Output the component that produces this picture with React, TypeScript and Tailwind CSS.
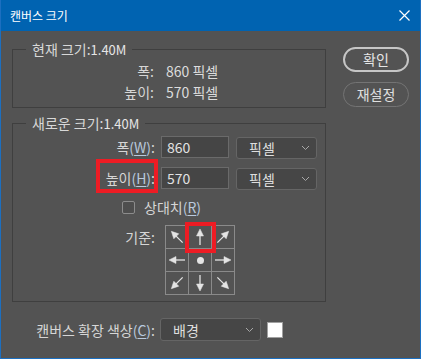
import React from 'react';

const font = { fontFamily: '"Noto Sans CJK KR", "Noto Sans", sans-serif' };

function Mnemonic({ ch }: { ch: string }) {
  return (
    <span className="text-[#b9c9dd]">
      (<span className="underline underline-offset-2">{ch}</span>)
    </span>
  );
}

function Chevron() {
  return (
    <svg width="9" height="6" viewBox="0 0 9 6" className="shrink-0">
      <path d="M1 1 L4.5 4.5 L8 1" fill="none" stroke="#a8a8a8" strokeWidth="1" />
    </svg>
  );
}

function Select({ value, className }: { value: string; className: string }) {
  return (
    <div
      className={`flex items-center justify-between rounded-[3px] border border-[#656565] bg-[#464646] pl-[12px] pr-[6px] text-[14px] text-[#dedede] ${className}`}
    >
      <span className="leading-none">{value}</span>
      <Chevron />
    </div>
  );
}

function Arrow({ angle }: { angle: number }) {
  return (
    <svg width="22" height="22" viewBox="0 0 22 22">
      <g transform={`rotate(${angle} 11 11)`} fill="#e4e4e4" stroke="#e4e4e4">
        <line x1="11" y1="9" x2="11" y2="19" strokeWidth="1.3" />
        <polygon points="11,3 7.5,10 14.5,10" strokeWidth="0.5" />
      </g>
    </svg>
  );
}

function AnchorGrid() {
  const cells: (number | null)[] = [315, 0, 45, 270, null, 90, 225, 180, 135];
  return (
    <div className="relative grid w-[70px] grid-cols-[repeat(3,22px)] gap-px border border-[#8a8a8a] bg-[#8a8a8a]">
      {cells.map((a, i) => (
        <div key={i} className="flex h-[22px] w-[22px] items-center justify-center bg-[#535353]">
          {a === null ? <div className="h-[7px] w-[7px] rounded-full bg-[#e4e4e4]" /> : <Arrow angle={a} />}
        </div>
      ))}
      <div className="absolute left-[19px] top-[-4px] h-[31px] w-[31px] border-4 border-[#ed1c24]" />
    </div>
  );
}

function Group({ title, size, className, children }: { title: string; size: string; className: string; children: React.ReactNode }) {
  return (
    <div className={`relative border border-[#3f3f3f] ${className}`}>
      <span className="absolute left-[13px] top-[-11px] bg-[#535353] px-[6px] text-[14px] leading-[20px] text-[#d8d8d8]">
        {title}
        <span className="text-[13px] text-[#e6e6e6]">{size}</span>
      </span>
      {children}
    </div>
  );
}

export default function App() {
  return (
    <div style={font} className="flex h-[359px] w-[421px] flex-col border-x border-b border-[#1c6fc0] bg-[#535353] text-[#d6d6d6]">
      <div className="flex h-[31px] shrink-0 items-center justify-between bg-[#0063b1] pl-[9px] pr-[10px]">
        <span className="text-[12px] leading-none text-white">캔버스 크기</span>
        <svg width="11" height="11" viewBox="0 0 11 11">
          <path d="M0.5 0.5 L10.5 10.5 M10.5 0.5 L0.5 10.5" stroke="#ffffff" strokeWidth="1.2" />
        </svg>
      </div>

      <div className="flex gap-[17px] pl-[11px] pt-[18px]">
        <div className="flex w-[314px] flex-col">
          <Group title="현재 크기:" size="1.40M" className="h-[59px] pt-[11px]">
            <div className="grid grid-cols-[141px_1fr] gap-x-[12px] text-[14px] leading-[21px]">
              <span className="text-right">폭:</span>
              <span className="text-[#dcdcdc]">860 픽셀</span>
              <span className="text-right">높이:</span>
              <span className="text-[#dcdcdc]">570 픽셀</span>
            </div>
          </Group>

          <Group title="새로운 크기:" size="1.40M" className="mt-[15px] h-[179px] pt-[12px]">
            <div className="flex flex-col">
              <div className="flex h-[22px] items-center">
                <span className="w-[142px] text-right text-[14px] leading-none">
                  폭<Mnemonic ch="W" />:
                </span>
                <div className="ml-[6px] flex h-[22px] w-[68px] items-center border border-[#6a6a6a] bg-[#454545] pl-[5px] text-[14px] text-[#e2e2e2]">
                  860
                </div>
                <Select value="픽셀" className="ml-[7px] mt-[2px] h-[22px] w-[81px]" />
              </div>

              <div className="mt-[9px] flex h-[22px] items-center">
                <div className="relative w-[142px] text-right text-[14px] leading-none">
                  높이<Mnemonic ch="H" />:
                  <div className="absolute right-[-3px] top-[-12px] h-[34px] w-[62px] border-4 border-[#ed1c24]" />
                </div>
                <div className="ml-[6px] flex h-[22px] w-[68px] items-center border border-[#6a6a6a] bg-[#454545] pl-[5px] text-[14px] text-[#e2e2e2]">
                  570
                </div>
                <Select value="픽셀" className="ml-[7px] mt-[2px] h-[22px] w-[81px]" />
              </div>

              <div className="mt-[10px] flex h-[16px] items-center pl-[109px]">
                <div className="h-[13px] w-[13px] rounded-[2px] border border-[#8c8c8c] bg-[#4e4e4e]" />
                <span className="ml-[9px] text-[14px] leading-none">
                  상대치<Mnemonic ch="R" />
                </span>
              </div>

              <div className="mt-[10px] flex items-start">
                <span className="mt-[2px] w-[142px] text-right text-[14px] leading-[20px]">기준:</span>
                <div className="ml-[10px]">
                  <AnchorGrid />
                </div>
              </div>
            </div>
          </Group>

          <div className="mt-[16px] flex items-center">
            <span className="w-[143px] text-right text-[14px] leading-none">
              캔버스 확장 색상<Mnemonic ch="C" />:
            </span>
            <Select value="배경" className="ml-[5px] h-[23px] w-[101px] pl-[10px]" />
            <div className="ml-[6px] h-[16px] w-[16px] border border-[#a0a0a0] bg-white" />
          </div>
        </div>

        <div className="flex flex-col gap-[10px]">
          <div className="-mt-[2px] flex h-[25px] w-[66px] items-center justify-center rounded-full border-2 border-[#c6c6c6] text-[14px] text-[#e6e6e6]">
            확인
          </div>
          <div className="flex h-[25px] w-[66px] items-center justify-center rounded-full border border-[#747474] text-[14px] text-[#e0e0e0]">
            재설정
          </div>
        </div>
      </div>
    </div>
  );
}
